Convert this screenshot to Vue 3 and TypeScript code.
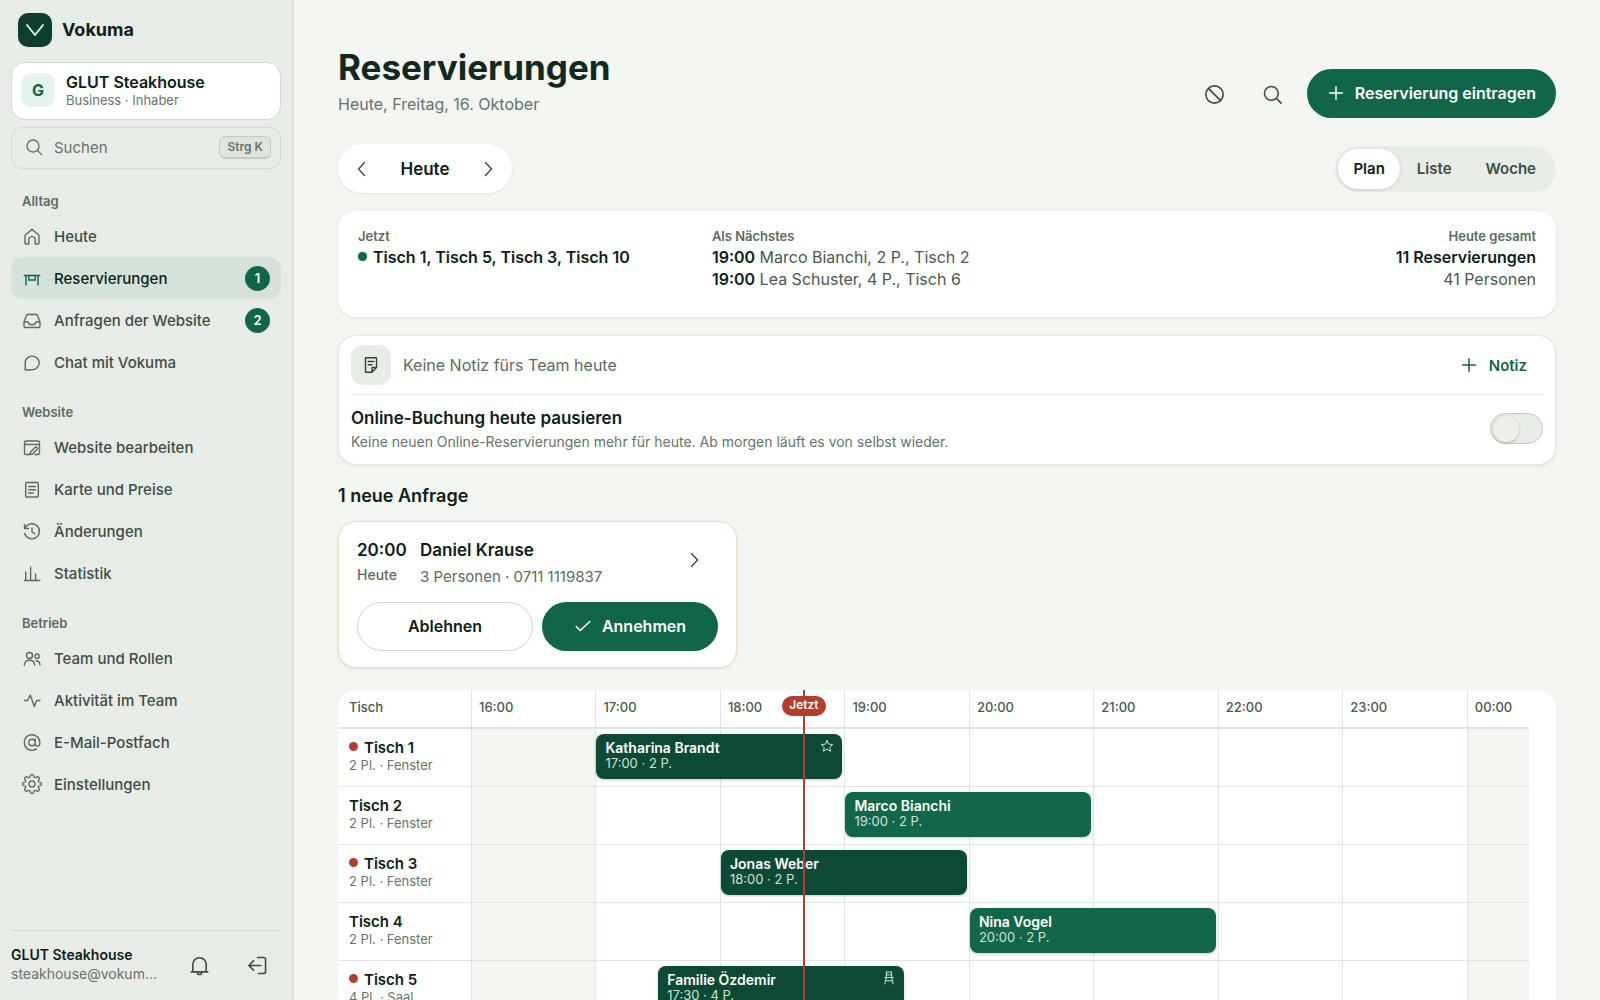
<script setup lang="ts">
import { ref } from 'vue'

interface NavItem { label: string; icon: string; badge?: number; active?: boolean }
interface NavGroup { title: string; items: NavItem[] }
interface Booking { name: string; time: string; party: number; hour: number; half?: boolean; seated?: boolean; mark?: 'star' | 'chair' }
interface TableRow { name: string; info: string; busy: boolean; booking: Booking }

// Outline of a cog with eight rounded teeth on a 20 × 20 grid
function cogPath(): string {
  const points: string[] = []
  for (let i = 0; i < 96; i++) {
    const a = (i / 96) * Math.PI * 2
    const r = 8.3 + 1.3 * Math.tanh(1.8 * Math.cos(8 * a))
    points.push(`${(10 + r * Math.sin(a)).toFixed(2)} ${(10 - r * Math.cos(a)).toFixed(2)}`)
  }
  return `M${points.join('L')}Z M13 10a3 3 0 1 1-6 0a3 3 0 1 1 6 0`
}

const icons: Record<string, string> = {
  home: 'M3 9.2 10 3.4l7 5.8v7.6a1.2 1.2 0 0 1-1.2 1.2h-2.6v-4.2a3.2 3.2 0 0 0-6.4 0V18H4.2A1.2 1.2 0 0 1 3 16.8z',
  table: 'M2.3 7.5h15.4M4 7.5v9.5M16 7.5v9.5M6.8 7.5v4.500h6.400V7.500',
  inbox: 'M5.6 4.5h8.8a1 1 0 0 1 .9.6l2.700 6.900v4a1.500 1.500 0 0 1-1.500 1.500h-13A1.500 1.500 0 0 1 2 16v-4l2.700-6.900a1 1 0 0 1 .9-.6zM2 12h4l1.600 2.500h4.800L14 12h4',
  chat: 'M3.2 18v-6.400a7 6.800 0 1 1 7.200 6.100z',
  browser: 'M7 17.500H4A1.500 1.500 0 0 1 2.500 16V5.500A1.500 1.500 0 0 1 4 4h12a1.500 1.500 0 0 1 1.500 1.500V16a1.500 1.500 0 0 1-1.500 1.500h-3M2.500 7.500h15M8 17.500l.5-2.500 4.500-4.500a1.300 1.300 0 0 1 2 2L10.500 17z',
  menu: 'M4.700 3.500h10.600a1 1 0 0 1 1 1v12.500a1 1 0 0 1-1 1H4.700a1 1 0 0 1-1-1V4.500a1 1 0 0 1 1-1zM6.700 7.500h6.800M6.700 10.800h6.800M6.700 14h4.500',
  history: 'M2.500 3.500v4h4M3 7.300A7.500 7.500 0 1 1 2.700 12.500M10 7v4l2.800 1.700',
  bars: 'M2.300 17.500h15.600M3.700 17.500V9M8.600 17.500V4M13.600 17.500v-6.500',
  team: 'M10.500 7.500a3 3 0 1 1-6 0a3 3 0 0 1 6 0zM2.300 17.300c.3-3.500 2.500-5 5.200-5s4.900 1.500 5.200 5M17.200 8.200a2.200 2.200 0 1 1-4.400 0a2.200 2.200 0 0 1 4.400 0zM14 12.700c2.200 0 3.700 1.500 4 4',
  pulse: 'M2.300 10.500h3.200L8.300 5l4 11.500 2.300-6h3.400',
  at: 'M13.200 10.500a3.200 3.200 0 1 1-6.400 0a3.200 3.200 0 0 1 6.400 0zM13.200 7.300v4.500a2.300 2.300 0 0 0 4.600 0v-1.300a7.800 7.800 0 1 0-3.300 6.400',
  cog: cogPath(),
  bell: 'M2.800 15.500h14.400M4.200 15.500V9a5.800 5.800 0 0 1 11.600 0v6.500M8 15.800a2 2 0 0 0 4 0',
  exit: 'M10 3h5.500A1.500 1.500 0 0 1 17 4.500v11a1.500 1.500 0 0 1-1.500 1.500H11M13 10H3M6.500 6l-4 4 4 4',
  search: 'M15 9a6 6 0 1 1-12 0a6 6 0 0 1 12 0zM13.500 13.500 17.500 17.500',
  block: 'M17.500 10a7.500 7.500 0 1 1-15 0a7.500 7.500 0 0 1 15 0zM4.700 4.700l10.600 10.600',
  plus: 'M10 3v14M3 10h14',
  left: 'M12.500 3.500 6.500 10l6 6.500',
  right: 'M7.500 3.500l6 6.500-6 6.500',
  check: 'M2.500 10.500l4.500 4.500L17.500 5',
  note: 'M4.500 2.800h11v9.700L11 17.200H4.500zM11 17.200v-4.700h4.500M7.200 6.500h5.600M7.200 9.800h3.800',
  star: 'M10 2l2.400 5.300 5.800.6-4.300 3.900 1.200 5.700-5.100-2.900-5.100 2.900 1.200-5.700L1.800 7.900l5.800-.6z',
  chair: 'M6 1.500h8M6.500 1.500l-.5 8M13.500 1.500l.5 8M6.300 5.500h7.400M4 9.500h12M6 9.500l-2 9M14 9.500l2 9M5.200 14h9.600',
}

const groups: NavGroup[] = [
  { title: 'Alltag', items: [
    { label: 'Heute', icon: 'home' },
    { label: 'Reservierungen', icon: 'table', badge: 1, active: true },
    { label: 'Anfragen der Website', icon: 'inbox', badge: 2 },
    { label: 'Chat mit Vokuma', icon: 'chat' },
  ] },
  { title: 'Website', items: [
    { label: 'Website bearbeiten', icon: 'browser' },
    { label: 'Karte und Preise', icon: 'menu' },
    { label: 'Änderungen', icon: 'history' },
    { label: 'Statistik', icon: 'bars' },
  ] },
  { title: 'Betrieb', items: [
    { label: 'Team und Rollen', icon: 'team' },
    { label: 'Aktivität im Team', icon: 'pulse' },
    { label: 'E-Mail-Postfach', icon: 'at' },
    { label: 'Einstellungen', icon: 'cog' },
  ] },
]

const views = ['Plan', 'Liste', 'Woche']
const view = ref('Plan')
const paused = ref(false)

const hours = ['16:00', '17:00', '18:00', '19:00', '20:00', '21:00', '22:00', '23:00', '00:00']
const rows: TableRow[] = [
  { name: 'Tisch 1', info: '2 Pl. · Fenster', busy: true, booking: { name: 'Katharina Brandt', time: '17:00', party: 2, hour: 1, seated: true, mark: 'star' } },
  { name: 'Tisch 2', info: '2 Pl. · Fenster', busy: false, booking: { name: 'Marco Bianchi', time: '19:00', party: 2, hour: 3 } },
  { name: 'Tisch 3', info: '2 Pl. · Fenster', busy: true, booking: { name: 'Jonas Weber', time: '18:00', party: 2, hour: 2, seated: true } },
  { name: 'Tisch 4', info: '2 Pl. · Fenster', busy: false, booking: { name: 'Nina Vogel', time: '20:00', party: 2, hour: 4 } },
  { name: 'Tisch 5', info: '4 Pl. · Saal', busy: true, booking: { name: 'Familie Özdemir', time: '17:30', party: 4, hour: 1, half: true, seated: true, mark: 'chair' } },
]

// 18:40 on an axis that runs from 16:00 to 00:30
const nowPercent = ((2 + 40 / 60) / 8.5) * 100
</script>

<template>
  <div class="app">
    <aside class="sidebar">
      <a class="brand" href="#">
        <span class="brand-mark"><svg viewBox="0 0 34 34"><path d="M9 12l8 10 8-10" /></svg></span>
        <span>Vokuma</span>
      </a>
      <button class="venue" type="button">
        <span class="venue-tile">G</span>
        <span class="stack">
          <strong>GLUT Steakhouse</strong>
          <small>Business · Inhaber</small>
        </span>
      </button>
      <button class="finder" type="button">
        <svg class="icon" viewBox="0 0 20 20"><path :d="icons.search" /></svg>
        <span>Suchen</span>
        <kbd>Strg K</kbd>
      </button>
      <nav>
        <section v-for="g in groups" :key="g.title" class="group">
          <h2>{{ g.title }}</h2>
          <a v-for="i in g.items" :key="i.label" href="#" class="nav-item" :class="{ active: i.active }">
            <svg class="icon" viewBox="0 0 20 20"><path :d="icons[i.icon]" /></svg>
            <span>{{ i.label }}</span>
            <span v-if="i.badge" class="badge">{{ i.badge }}</span>
          </a>
        </section>
      </nav>
      <footer class="account">
        <div class="who">
          <strong>GLUT Steakhouse</strong>
          <small>steakhouse@vokum…</small>
        </div>
        <button class="icon-button" type="button" aria-label="Mitteilungen">
          <svg class="icon large" viewBox="0 0 20 20"><path :d="icons.bell" /></svg>
        </button>
        <button class="icon-button" type="button" aria-label="Abmelden">
          <svg class="icon large" viewBox="0 0 20 20"><path :d="icons.exit" /></svg>
        </button>
      </footer>
    </aside>

    <main>
      <header class="page-head">
        <div class="titles">
          <h1>Reservierungen</h1>
          <p>Heute, Freitag, 16. Oktober</p>
        </div>
        <button class="icon-button" type="button" aria-label="Sperren">
          <svg class="icon large" viewBox="0 0 20 20"><path :d="icons.block" /></svg>
        </button>
        <button class="icon-button" type="button" aria-label="Suchen">
          <svg class="icon large" viewBox="0 0 20 20"><path :d="icons.search" /></svg>
        </button>
        <button class="pill primary" type="button">
          <svg class="icon small" viewBox="0 0 20 20"><path :d="icons.plus" /></svg>
          Reservierung eintragen
        </button>
      </header>

      <div class="toolbar">
        <div class="day-nav">
          <button type="button" aria-label="Vorheriger Tag"><svg class="icon" viewBox="0 0 20 20"><path :d="icons.left" /></svg></button>
          <button type="button" class="today">Heute</button>
          <button type="button" aria-label="Nächster Tag"><svg class="icon" viewBox="0 0 20 20"><path :d="icons.right" /></svg></button>
        </div>
        <div class="segments">
          <button v-for="v in views" :key="v" type="button" :class="{ on: v === view }" @click="view = v">{{ v }}</button>
        </div>
      </div>

      <section class="card summary">
        <div>
          <h3>Jetzt</h3>
          <p><span class="live"></span><strong>Tisch 1, Tisch 5, Tisch 3, Tisch 10</strong></p>
        </div>
        <div>
          <h3>Als Nächstes</h3>
          <p><strong>19:00</strong> Marco Bianchi, 2 P., Tisch 2</p>
          <p><strong>19:00</strong> Lea Schuster, 4 P., Tisch 6</p>
        </div>
        <div class="total">
          <h3>Heute gesamt</h3>
          <p><strong>11 Reservierungen</strong></p>
          <p>41 Personen</p>
        </div>
      </section>

      <section class="card notes">
        <div class="note-row">
          <span class="note-tile"><svg class="icon" viewBox="0 0 20 20"><path :d="icons.note" /></svg></span>
          <span class="note-text">Keine Notiz fürs Team heute</span>
          <button class="add-note" type="button">
            <svg class="icon small" viewBox="0 0 20 20"><path :d="icons.plus" /></svg>
            Notiz
          </button>
        </div>
        <label class="pause-row" for="pause">
          <span class="stack">
            <strong>Online-Buchung heute pausieren</strong>
            <small>Keine neuen Online-Reservierungen mehr für heute. Ab morgen läuft es von selbst wieder.</small>
          </span>
          <input id="pause" v-model="paused" class="switch" type="checkbox" role="switch">
        </label>
      </section>

      <h2 class="section-title">1 neue Anfrage</h2>
      <article class="request">
        <div class="request-head">
          <div class="request-time">
            <strong>20:00</strong>
            <span>Heute</span>
          </div>
          <div class="request-who">
            <strong>Daniel Krause</strong>
            <span>3 Personen · 0711 1119837</span>
          </div>
          <button class="icon-button" type="button" aria-label="Anfrage öffnen">
            <svg class="icon" viewBox="0 0 20 20"><path :d="icons.right" /></svg>
          </button>
        </div>
        <div class="request-actions">
          <button class="pill outline" type="button">Ablehnen</button>
          <button class="pill primary" type="button">
            <svg class="icon small" viewBox="0 0 20 20"><path :d="icons.check" /></svg>
            Annehmen
          </button>
        </div>
      </article>

      <section class="plan">
        <div class="plan-inner">
          <table>
            <thead>
              <tr>
                <th scope="col">Tisch</th>
                <th v-for="h in hours" :key="h" scope="col">{{ h }}</th>
              </tr>
            </thead>
            <tbody>
              <tr v-for="r in rows" :key="r.name">
                <th scope="row">
                  <strong><span v-if="r.busy" class="busy"></span>{{ r.name }}</strong>
                  <small>{{ r.info }}</small>
                </th>
                <td v-for="(h, n) in hours" :key="h" :class="{ closed: n === 0 || n === 8 }">
                  <button
                    v-if="r.booking.hour === n"
                    type="button"
                    class="booking"
                    :class="{ seated: r.booking.seated, half: r.booking.half }"
                  >
                    <strong>{{ r.booking.name }}</strong>
                    <small>{{ r.booking.time }} · {{ r.booking.party }} P.</small>
                    <svg v-if="r.booking.mark" class="mark" viewBox="0 0 20 20"><path :d="icons[r.booking.mark]" /></svg>
                  </button>
                </td>
              </tr>
            </tbody>
          </table>
          <div class="now-layer">
            <div class="now" :style="{ left: nowPercent + '%' }"><span>Jetzt</span></div>
          </div>
        </div>
      </section>
    </main>
  </div>
</template>

<style>
body {
  background: #f2f5f0;
}
</style>

<style scoped>
* {
  box-sizing: border-box;
}

.app {
  display: flex;
  height: 100vh;
  overflow: hidden;
  background: #f2f5f0;
  color: #0d2118;
  font-family: Inter, "Liberation Sans", sans-serif;
  font-size: 16px;
}

h1, h2, h3, p {
  margin: 0;
}

button {
  border: 0;
  padding: 0;
  background: none;
  color: inherit;
  font: inherit;
  text-align: left;
  cursor: pointer;
}

a {
  color: inherit;
  text-decoration: none;
}

strong {
  font-weight: 600;
}

.icon, .mark {
  flex: none;
  width: 20px;
  height: 20px;
  fill: none;
  stroke: currentColor;
  stroke-width: 1.4;
  stroke-linecap: round;
  stroke-linejoin: round;
}

.icon.small {
  width: 18px;
  height: 18px;
  stroke-width: 1.7;
}

.icon.large {
  width: 23px;
  height: 23px;
}

.stack {
  display: flex;
  flex-direction: column;
}

/* Sidebar */
.sidebar {
  flex: none;
  display: flex;
  flex-direction: column;
  width: 294px;
  padding: 13px 11px 11px;
  border-right: 2px solid #dce1db;
  background: #e8ece6;
}

.brand {
  display: flex;
  align-items: center;
  gap: 10px;
  padding-left: 7px;
  margin-bottom: 15px;
  font-size: 18px;
  font-weight: 700;
  line-height: 32px;
}

.brand-mark {
  width: 34px;
  height: 34px;
  border-radius: 10px;
  background: #0f3d2e;
}

.brand-mark svg {
  display: block;
  fill: none;
  stroke: #d3f3e3;
  stroke-width: 2;
  stroke-linecap: round;
  stroke-linejoin: round;
}

.venue {
  display: flex;
  align-items: center;
  gap: 11px;
  height: 58px;
  padding: 0 9px 2px;
  border: 1px solid #d3d9d2;
  border-radius: 14px;
  background: #fff;
}

.venue-tile {
  width: 34px;
  height: 34px;
  border-radius: 10px;
  background: #e6f5ec;
  color: #11664a;
  font-weight: 700;
  line-height: 34px;
  text-align: center;
}

.venue strong {
  font-size: 16px;
  line-height: 20px;
}

.venue small {
  color: #66736b;
  font-size: 13px;
  line-height: 16px;
}

.finder {
  display: flex;
  align-items: center;
  gap: 10px;
  height: 42px;
  margin-top: 7px;
  padding: 0 9px 2px 12px;
  border: 1px solid #d3d9d2;
  border-radius: 12px;
  color: #66736b;
  font-size: 15px;
}

kbd {
  margin-left: auto;
  padding: 0 7px;
  border: 1px solid #c3cac3;
  border-bottom-width: 2px;
  border-radius: 6px;
  background: #dfe4dd;
  font: 600 12px/20px Inter, sans-serif;
}

.group {
  margin-top: 19px;
}

.group h2 {
  margin-bottom: 4px;
  padding-left: 11px;
  color: #5c6a62;
  font-size: 13px;
  font-weight: 600;
  line-height: 20px;
}

nav {
  padding-top: 3px;
}

.nav-item {
  display: flex;
  align-items: center;
  gap: 12px;
  height: 42px;
  padding: 0 11px;
  border-radius: 12px;
  color: #3d4c44;
  font-size: 15px;
  font-weight: 500;
}

.nav-item .icon {
  color: #5c6a62;
}

.nav-item.active {
  background: #d6e1da;
  color: #0d2118;
}

.nav-item.active .icon {
  color: #11664a;
}

.badge {
  width: 25px;
  height: 25px;
  margin-left: auto;
  border-radius: 50%;
  background: #11664a;
  color: #fff;
  font-size: 13px;
  font-weight: 600;
  line-height: 25px;
  text-align: center;
}

.account {
  display: flex;
  align-items: center;
  gap: 10px;
  margin-top: auto;
  padding-top: 10px;
  border-top: 1px solid #cfd5ce;
}

.who {
  display: flex;
  flex: 1;
  flex-direction: column;
  min-width: 0;
  padding-bottom: 2px;
  white-space: nowrap;
}

.who strong {
  font-size: 14px;
  line-height: 19px;
}

.who small {
  color: #66736b;
  font-size: 14px;
  line-height: 19px;
}

.icon-button {
  display: flex;
  flex: none;
  align-items: center;
  justify-content: center;
  width: 48px;
  height: 48px;
  color: #3d4c44;
}

/* Page */
main {
  flex: 1;
  min-width: 0;
  padding: 43px 44px 0;
  overflow-y: auto;
  scrollbar-width: none;
}

.page-head {
  display: flex;
  align-items: flex-end;
  gap: 10px;
}

.titles {
  flex: 1;
}

h1 {
  color: #11291f;
  font-size: 35px;
  font-weight: 700;
  line-height: 48px;
}

.titles p {
  color: #66736b;
  font-size: 16px;
  line-height: 27px;
}

.pill {
  display: flex;
  align-items: center;
  justify-content: center;
  gap: 10px;
  height: 49px;
  padding: 0 20px 2px;
  border-radius: 25px;
  font-size: 16px;
  font-weight: 600;
}

.primary {
  background: #11664a;
  color: #fff;
}

.outline {
  border: 1px solid #cdd2cd;
  background: #fff;
}

.toolbar {
  display: flex;
  align-items: center;
  justify-content: space-between;
  margin-top: 26px;
}

.day-nav {
  display: flex;
  height: 49px;
  border-radius: 25px;
  background: #fff;
  box-shadow: 0 1px 3px rgb(15 45 30 / 8%);
}

.day-nav button {
  display: flex;
  align-items: center;
  justify-content: center;
  width: 48px;
  color: #3d4c44;
}

.day-nav .today {
  width: 78px;
  color: #0d2118;
  font-size: 17px;
  font-weight: 600;
}

.segments {
  display: flex;
  height: 46px;
  padding: 3px;
  border-radius: 23px;
  background: #e8ece6;
}

.segments button {
  padding: 0 17px;
  border-radius: 20px;
  color: #3d4c44;
  font-size: 15px;
  font-weight: 600;
}

.segments .on {
  padding: 0 15px;
  background: #fff;
  box-shadow: 0 1px 3px rgb(15 45 30 / 15%);
  color: #0d2118;
}

.card {
  margin-top: 18px;
  border-radius: 18px;
  background: #fff;
  box-shadow: 0 1px 3px rgb(15 45 30 / 10%);
}

.summary {
  display: grid;
  grid-template-columns: 1fr 2fr auto;
  column-gap: 24px;
  min-height: 106px;
  padding: 15px 20px;
}

.summary h3 {
  color: #5c6a62;
  font-size: 13px;
  font-weight: 600;
  line-height: 20px;
}

.summary p {
  color: #4a5850;
  font-size: 16px;
  line-height: 22px;
}

.summary strong {
  color: #0d2118;
}

.total {
  text-align: right;
}

.live {
  display: inline-block;
  width: 9px;
  height: 9px;
  margin-right: 6px;
  border-radius: 50%;
  background: #11664a;
  box-shadow: 0 0 0 2px #e6f5ec;
  vertical-align: 2px;
}

.notes {
  padding: 0 12px;
  border: 1px solid #e5e9e4;
}

.note-row {
  display: flex;
  align-items: center;
  gap: 12px;
  height: 59px;
  border-bottom: 1px solid #e5e9e4;
}

.note-tile {
  display: flex;
  align-items: center;
  justify-content: center;
  width: 40px;
  height: 40px;
  border-radius: 12px;
  background: #e8ece6;
  color: #2c4438;
}

.note-text {
  flex: 1;
  color: #5c6a62;
}

.add-note {
  display: flex;
  align-items: center;
  gap: 11px;
  height: 40px;
  padding: 0 16px;
  color: #11664a;
  font-size: 15px;
  font-weight: 600;
}

.pause-row {
  display: flex;
  align-items: center;
  justify-content: space-between;
  height: 69px;
  padding-bottom: 2px;
}

.pause-row strong {
  font-size: 17px;
  line-height: 26px;
}

.pause-row small {
  color: #66736b;
  font-size: 14px;
  line-height: 22px;
}

.switch {
  appearance: none;
  display: flex;
  align-items: center;
  width: 53px;
  height: 31px;
  margin: 0;
  padding: 0 2px;
  border: 1px solid #c3cac3;
  border-radius: 16px;
  background: #e8ece6;
}

.switch::before {
  content: "";
  width: 26px;
  height: 26px;
  border-radius: 50%;
  background: #eceee8;
  box-shadow: 0 1px 3px rgb(15 45 30 / 25%);
}

.switch:checked {
  justify-content: flex-end;
  background: #11664a;
}

.section-title {
  margin: 18px 0 12px;
  font-size: 18px;
  font-weight: 600;
  line-height: 26px;
}

.request {
  max-width: 399px;
  padding: 14px 18px 16px;
  border: 1px solid #eddcbf;
  border-radius: 18px;
  background: #fff;
  box-shadow: 0 1px 3px rgb(15 45 30 / 10%);
}

.request-head {
  display: flex;
  align-items: flex-start;
  margin-bottom: 12px;
}

.request-time, .request-who {
  display: flex;
  flex-direction: column;
}

.request-time {
  width: 63px;
}

.request-who {
  flex: 1;
}

.request-head strong {
  font-size: 17px;
  line-height: 28px;
}

.request-time span {
  color: #5c6a62;
  font-size: 14px;
  font-weight: 500;
  line-height: 22px;
}

.request-who span {
  color: #5c6a62;
  font-size: 15px;
  line-height: 26px;
}

.request-actions {
  display: grid;
  grid-template-columns: 1fr 1fr;
  gap: 9px;
}

/* Table plan */
.plan {
  margin-top: 22px;
  padding-right: 27px;
  border-radius: 18px 18px 0 0;
  background: #fff;
}

.plan-inner {
  position: relative;
}

table, thead, tbody {
  display: block;
}

tr {
  display: grid;
  grid-template-columns: 133px repeat(8, 2fr) 1fr;
}

thead tr {
  height: 39px;
  border-bottom: 2px solid #e1e5e1;
}

thead th {
  padding: 0 0 0 7px;
  border-left: 1px solid #e1e5e1;
  color: #4a5850;
  font-size: 13px;
  font-weight: 500;
  line-height: 35px;
  text-align: left;
}

thead th:first-child {
  padding-left: 11px;
  border-left: 0;
}

tbody tr {
  height: 58px;
  border-bottom: 1px solid #e1e5e1;
}

tbody th {
  display: flex;
  flex-direction: column;
  justify-content: center;
  padding: 0 0 2px 11px;
  font-weight: 400;
  text-align: left;
}

tbody th strong {
  font-size: 15px;
  line-height: 18px;
}

tbody th small {
  color: #66736b;
  font-size: 13px;
  line-height: 17px;
}

.busy {
  display: inline-block;
  width: 9px;
  height: 9px;
  margin-right: 6px;
  border-radius: 50%;
  background: #b43e2d;
  vertical-align: 2px;
}

td {
  position: relative;
  padding: 0;
  border-left: 1px solid #e1e5e1;
}

.closed {
  background: #f2f5f0;
}

.booking {
  position: absolute;
  z-index: 1;
  top: 5px;
  left: 0;
  display: flex;
  flex-direction: column;
  justify-content: center;
  width: calc(200% - 1px);
  height: 45px;
  padding: 0 0 3px 9px;
  border-radius: 8px;
  background: #12664a;
  box-shadow: 0 1px 3px rgb(15 45 30 / 25%);
  color: #fff;
}

.booking.seated {
  background: #0d4a36;
}

.booking.half {
  left: 50%;
}

.booking strong {
  font-size: 14px;
  line-height: 17px;
}

.booking small {
  color: #cde5d9;
  font-size: 13px;
  line-height: 15px;
}

.mark {
  position: absolute;
  top: 5px;
  right: 8px;
  width: 14px;
  height: 14px;
  color: #cde5d9;
}

.now-layer {
  position: absolute;
  z-index: 2;
  inset: 0 0 0 133px;
  pointer-events: none;
}

.now {
  position: absolute;
  top: 0;
  bottom: 0;
  display: flex;
  justify-content: center;
  width: 2px;
  background: #b43e2d;
}

.now span {
  align-self: flex-start;
  flex: none;
  margin-top: 6px;
  padding: 0 7px 2px;
  border-radius: 10px;
  background: #b43e2d;
  color: #fff;
  font-size: 12px;
  font-weight: 600;
  line-height: 18px;
}
</style>
